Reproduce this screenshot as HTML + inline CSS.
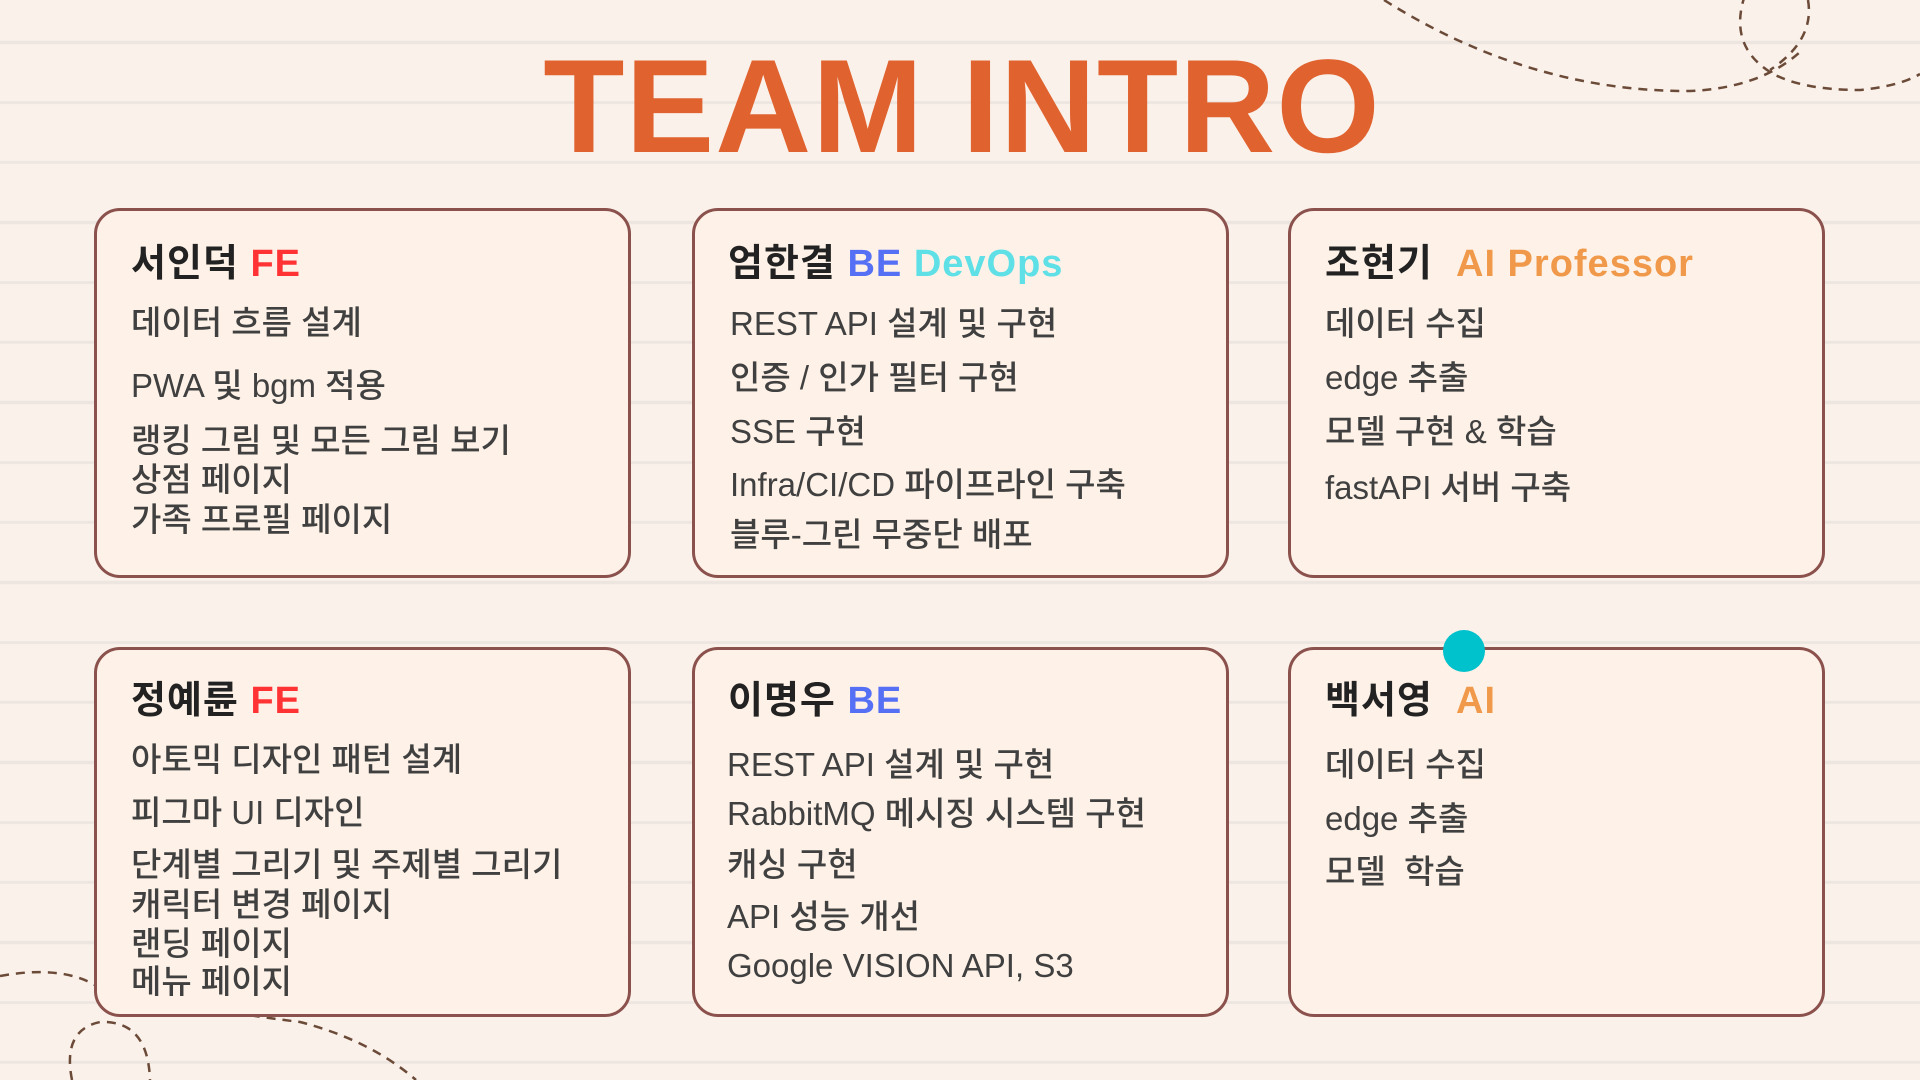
<!DOCTYPE html>
<html><head><meta charset="utf-8"><style>
*{margin:0;padding:0;box-sizing:border-box}
body{width:1920px;height:1080px;overflow:hidden;position:relative;background:#faf1ea;font-family:"Liberation Sans","Noto Sans CJK KR",sans-serif}
.lines{position:absolute;inset:0;background:repeating-linear-gradient(to bottom,transparent 0,transparent 39px,#ece5e0 39px,#ece5e0 42px,transparent 42px,transparent 60px);background-position:0 2px}
h1{position:absolute;left:0;width:1920px;top:42px;text-align:center;font-size:133px;line-height:130px;font-weight:700;color:#e0622f;letter-spacing:1px;padding-left:4px}
.card{position:absolute;width:537px;height:370px;background:#fef2e8;border:3px solid #8b514c;border-radius:26px}
.t{position:absolute;height:44px;line-height:44px;white-space:nowrap;font-size:33px;color:#404040;font-weight:500;font-family:"Liberation Sans","Noto Sans CJK KR",sans-serif}
.n{font-size:38px;font-weight:700;color:#222;letter-spacing:1px}
.fe{color:#ff3333}.be{color:#5570f5}.dv{color:#5ee0e6}.ai{color:#f0994a}
</style></head><body>
<div class="lines"></div>
<svg width="1920" height="1080" style="position:absolute;left:0;top:0" fill="none" stroke="#6b4a38" stroke-width="2.5" stroke-dasharray="9 7">
<path d="M1384,0 Q1530,92 1690,91 Q1760,88 1800,52"/>
<path d="M1745,-5 Q1728,45 1770,72 Q1800,90 1860,90 Q1900,86 1920,74"/>
<path d="M1808,0 Q1815,40 1770,70"/>
<path d="M0,976 Q60,965 95,985 Q200,1010 300,1022 Q370,1040 416,1080"/>
<path d="M72,1080 Q62,1030 100,1022 Q148,1020 150,1080"/>
</svg>
<h1>TEAM INTRO</h1>

<div class="card" style="left:94px;top:208px"></div>
<div class="card" style="left:692px;top:208px"></div>
<div class="card" style="left:1288px;top:208px"></div>
<div class="card" style="left:94px;top:647px"></div>
<div class="card" style="left:692px;top:647px"></div>
<div class="card" style="left:1288px;top:647px"></div>
<div style="position:absolute;left:1443px;top:630px;width:42px;height:42px;border-radius:50%;background:#00c2cc"></div>

<div class="t n" style="left:131px;top:242px">서인덕 <span class="fe">FE</span></div>
<div class="t" style="left:131px;top:301px">데이터 흐름 설계</div>
<div class="t" style="left:131px;top:364px">PWA 및 bgm 적용</div>
<div class="t" style="left:131px;top:419px">랭킹 그림 및 모든 그림 보기</div>
<div class="t" style="left:131px;top:458px">상점 페이지</div>
<div class="t" style="left:131px;top:498px">가족 프로필 페이지</div>

<div class="t n" style="left:728px;top:242px">엄한결 <span class="be">BE</span> <span class="dv">DevOps</span></div>
<div class="t" style="left:730px;top:302px">REST API 설계 및 구현</div>
<div class="t" style="left:730px;top:356px">인증 / 인가 필터 구현</div>
<div class="t" style="left:730px;top:410px">SSE 구현</div>
<div class="t" style="left:730px;top:463px">Infra/CI/CD 파이프라인 구축</div>
<div class="t" style="left:730px;top:513px">블루-그린 무중단 배포</div>

<div class="t n" style="left:1325px;top:242px">조현기 &nbsp;<span class="ai">AI Professor</span></div>
<div class="t" style="left:1325px;top:302px">데이터 수집</div>
<div class="t" style="left:1325px;top:356px">edge 추출</div>
<div class="t" style="left:1325px;top:410px">모델 구현 &amp; 학습</div>
<div class="t" style="left:1325px;top:466px">fastAPI 서버 구축</div>

<div class="t n" style="left:131px;top:679px">정예륜 <span class="fe">FE</span></div>
<div class="t" style="left:131px;top:738px">아토믹 디자인 패턴 설계</div>
<div class="t" style="left:131px;top:791px">피그마 UI 디자인</div>
<div class="t" style="left:131px;top:843px">단계별 그리기 및 주제별 그리기</div>
<div class="t" style="left:131px;top:883px">캐릭터 변경 페이지</div>
<div class="t" style="left:131px;top:922px">랜딩 페이지</div>
<div class="t" style="left:131px;top:960px">메뉴 페이지</div>

<div class="t n" style="left:728px;top:679px">이명우 <span class="be">BE</span></div>
<div class="t" style="left:727px;top:743px">REST API 설계 및 구현</div>
<div class="t" style="left:727px;top:792px">RabbitMQ 메시징 시스템 구현</div>
<div class="t" style="left:727px;top:843px">캐싱 구현</div>
<div class="t" style="left:727px;top:895px">API 성능 개선</div>
<div class="t" style="left:727px;top:944px">Google VISION API, S3</div>

<div class="t n" style="left:1325px;top:679px">백서영 &nbsp;<span class="ai">AI</span></div>
<div class="t" style="left:1325px;top:743px">데이터 수집</div>
<div class="t" style="left:1325px;top:797px">edge 추출</div>
<div class="t" style="left:1325px;top:850px">모델 &nbsp;학습</div>
</body></html>
